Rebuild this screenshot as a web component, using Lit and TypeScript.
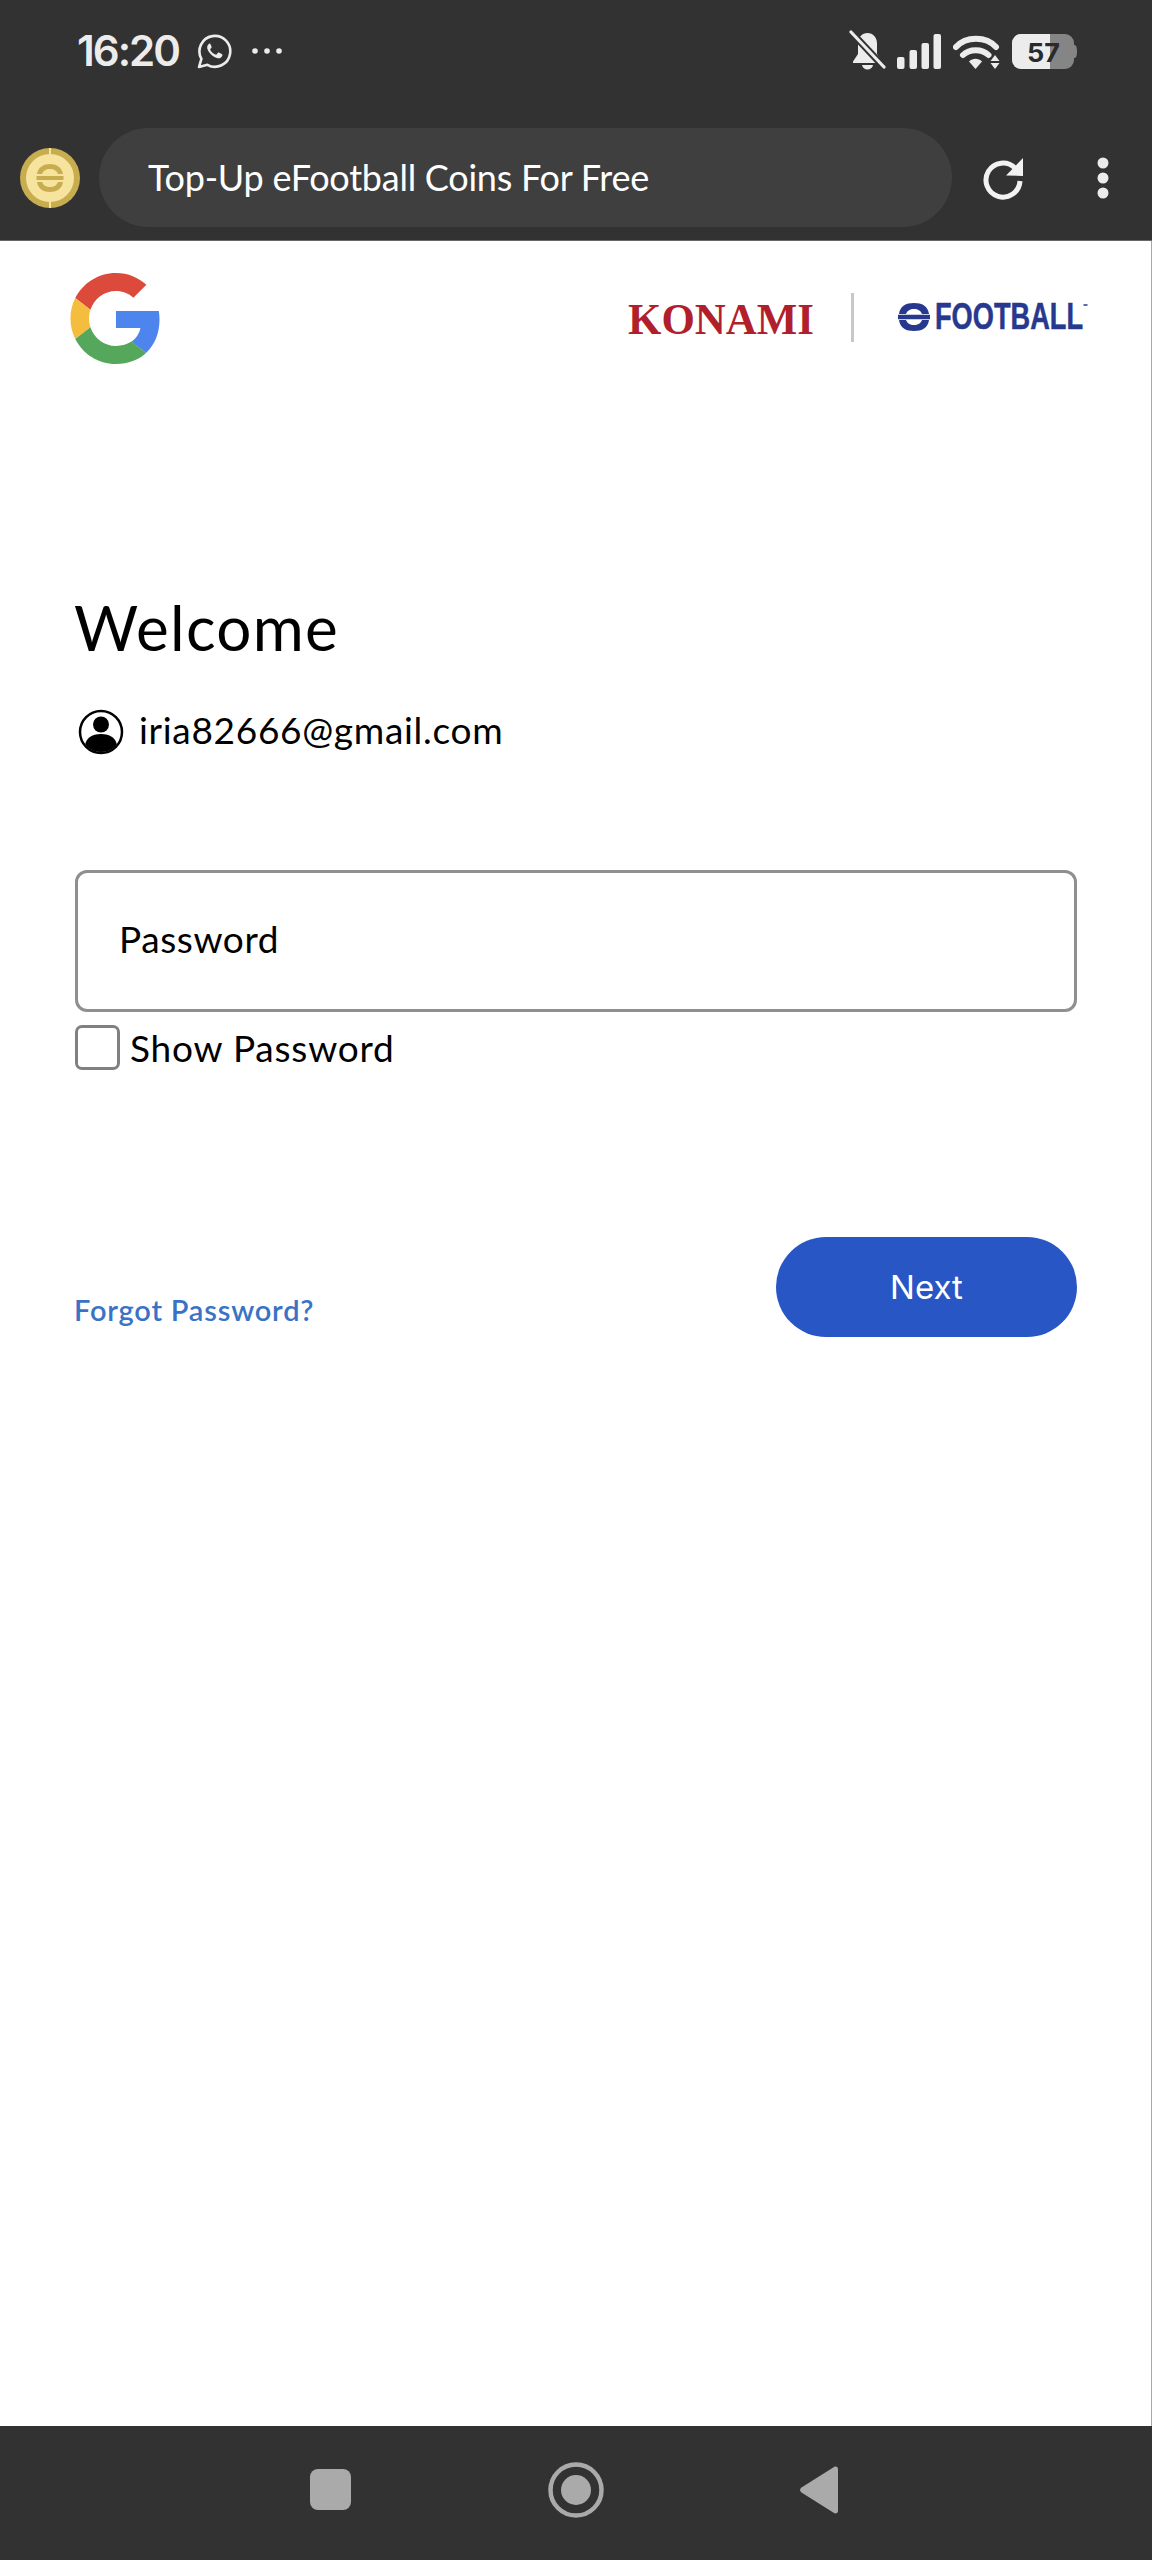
import { LitElement, html, css } from "lit";
import { customElement } from "lit/decorators.js";

@customElement("app-root")
export class AppRoot extends LitElement {
  static styles = css`
    :host { display: block; width: 1152px; height: 2560px; font-family: Lato, "Noto Sans", sans-serif; color: #000; }
    * { box-sizing: border-box; }
    .page { width: 1152px; height: 2560px; display: flex; flex-direction: column; background: #fff; }
    .top { height: 241px; background: #323232; border-bottom: 1px solid #666; flex: none; }
    .status { height: 128px; padding: 34px 75px 0 77px; display: flex; align-items: flex-start; color: #ececec; }
    .time { font: 600 42px/34px Inter, sans-serif; letter-spacing: -2px; width: 120px; }
    .wa { width: 35px; height: 35px; display: block; }
    .more { width: 30px; height: 6px; margin: 14px 0 0 20px; display: block; }
    .spacer { flex: 1; }
    .sys { display: flex; align-items: flex-start; }
    .bell { width: 37px; height: 40px; margin: -4px 11px 0 0; display: block; }
    .signal { width: 44px; height: 35px; margin-right: 12px; display: block; }
    .wifi { width: 47px; height: 35px; margin-right: 12px; display: block; }
    .battery { width: 65px; height: 35px; display: block; overflow: visible; }
    .toolbar { height: 99px; padding-left: 20px; display: flex; align-items: center; }
    .coin { width: 60px; height: 60px; display: block; }
    .pill { width: 853px; height: 99px; margin-left: 19px; border-radius: 50px; background: #3f3f3f; color: #fff; display: flex; align-items: center; padding: 0 0 2px 49px; font-size: 36px; letter-spacing: -.25px; font-weight: 400; white-space: nowrap; }
    .reload { width: 44px; height: 44px; margin-left: 29px; display: block; }
    .dots { width: 12px; height: 42px; margin-left: 72px; display: block; }
    .main { flex: 1; border-right: 1px solid #a8a8a8; padding: 32px 74px 0 75px; display: flex; flex-direction: column; }
    .brand { display: flex; align-items: flex-start; justify-content: space-between; height: 92px; margin-left: -5px; }
    .g { width: 90px; height: 91px; display: block; }
    .logos { display: flex; align-items: flex-start; margin-right: -61px; }
    .konami { width: 200px; height: 52px; margin-top: 20px; display: block; }
    .sep { width: 3px; height: 49px; background: #c8c8c8; margin: 20px 44px 0 25px; }
    .ef { width: 240px; height: 44px; margin-top: 20px; display: block; }
    h1 { margin: 226px 0 0 -1px; font-size: 62px; line-height: 72px; font-weight: 400; letter-spacing: 1.3px; }
    .email { display: flex; align-items: center; margin-top: 46px; height: 46px; font-size: 37px; letter-spacing: .7px; padding-left: 3px; gap: 15px; }
    .email span { margin-top: -5px; }
    .avatar { width: 46px; height: 46px; display: block; }
    .input { margin-top: 115px; height: 142px; border: 3px solid #8f8f8f; border-radius: 12px; display: flex; align-items: center; padding: 0 0 6px 41px; font-size: 37px; letter-spacing: .6px; }
    .show { display: flex; align-items: center; margin-top: 13px; height: 45px; font-size: 37px; letter-spacing: .8px; gap: 10px; }
    .box { width: 45px; height: 45px; border: 3px solid #808080; border-radius: 7px; flex: none; }
    .actions { display: flex; align-items: flex-end; justify-content: space-between; margin-top: 167px; }
    .forgot { color: #3a73c4; font-size: 29px; font-weight: 600; letter-spacing: .8px; line-height: 36px; margin: 0 0 9px -1px; }
    .next { width: 301px; height: 100px; border-radius: 50px; background: #2856c4; color: #fff; display: flex; align-items: center; justify-content: center; font: 400 33px/1 Inter, sans-serif; }
    .nav { height: 134px; background: #323232; flex: none; display: flex; align-items: flex-start; padding: 36px 0 0 310px; }
    .navsq { width: 41px; height: 41px; margin-top: 7px; border-radius: 8px; background: #aaa; }
    .navc { width: 56px; height: 56px; margin-left: 197px; display: block; }
    .navb { width: 40px; height: 48px; margin-left: 196px; margin-top: 4px; display: block; }
  `;

  render() {
    return html`
      <div class="page">
        <div class="top">
          <div class="status">
            <div class="time">16:20</div>
            <svg class="wa" viewBox="0 0 35 35" fill="none">
              <path d="M2 33l2.4-8.2A15.4 15.4 0 1 1 10.4 30.8z" stroke="#ececec" stroke-width="2.6" stroke-linejoin="round"/>
              <path d="M12.6 9.6c-1 .2-2.7 2-2.4 4.4.4 3 4.7 9 10.4 10.2 2.3.4 4.4-1 4.8-2.8.1-.7-.1-1-.6-1.300l-3-1.500c-.5-.2-.8-.1-1.100.3l-1.200 1.500c-.3.3-.6.4-1 .2-2.300-1-4-2.500-5.200-4.600-.2-.4-.1-.7.100-1l1-1.200c.3-.3.300-.6.200-1l-1.200-2.900c-.2-.4-.5-.5-.8-.5z" fill="#ececec"/>
            </svg>
            <svg class="more" viewBox="0 0 30 6"><circle cx="3" cy="3" r="2.800" fill="#ececec"/><circle cx="15" cy="3" r="2.800" fill="#ececec"/><circle cx="27" cy="3" r="2.800" fill="#ececec"/></svg>
            <div class="spacer"></div>
            <div class="sys">
              <svg class="bell" viewBox="0 0 37 40">
                <path d="M18.500 3c5.500 0 9.500 4.300 9.500 10.500V24l5 7.500v1.500H4v-1.500l5-7.500V13.500C9 7.300 13 3 18.500 3z" fill="#ececec"/>
                <path d="M13 35h11c-.5 2.800-2.800 4.500-5.500 4.500S13.500 37.800 13 35z" fill="#ececec"/>
                <path d="M2 2l33 35" stroke="#323232" stroke-width="7"/>
                <path d="M2 2l33 35" stroke="#ececec" stroke-width="3.200" stroke-linecap="round"/>
              </svg>
              <svg class="signal" viewBox="0 0 44 35" fill="#ececec">
                <rect x="0" y="23" width="7.500" height="12" rx="2"/>
                <rect x="12.500" y="16" width="7.500" height="19" rx="2"/>
                <rect x="24.500" y="9" width="7.500" height="26" rx="2"/>
                <rect x="36.500" y="0" width="7.500" height="35" rx="2"/>
              </svg>
              <svg class="wifi" viewBox="0 0 47 35" fill="none">
                <path d="M3 13C13 2 33 2 43 13" stroke="#ececec" stroke-width="6" stroke-linecap="round"/>
                <path d="M10 21C16.500 14.500 29 14.500 35.500 21" stroke="#ececec" stroke-width="6" stroke-linecap="round"/>
                <path d="M16 27.500c3.500-3.800 9.500-3.800 13 0L22.500 35z" fill="#ececec"/>
                <path d="M42 21l4.500 6h-9zM42 35l4.500-6h-9z" fill="#ececec"/>
              </svg>
              <svg class="battery" viewBox="0 0 65 35">
                <rect x="0" y="0" width="62" height="35" rx="9" fill="#858585"/>
                <path d="M61 11h1.500c1.500 0 2.500 2 2.500 6.500s-1 6.500-2.500 6.500H61z" fill="#858585"/>
                <path d="M9 0h29v35H9a9 9 0 0 1-9-9V9a9 9 0 0 1 9-9z" fill="#ececec"/>
                <text x="15" y="28" font-family="Inter, sans-serif" font-size="26" font-weight="700" fill="#2a2a2a" textLength="33" lengthAdjust="spacingAndGlyphs">57</text>
              </svg>
            </div>
          </div>
          <div class="toolbar">
            <svg class="coin" viewBox="0 0 60 60">
              <circle cx="30" cy="30" r="30" fill="#c8ad50"/>
              <circle cx="30" cy="30" r="24" fill="#f6e39e"/>
              <rect x="29" y="0" width="2" height="6" fill="#f6e39e"/>
              <rect x="29" y="54" width="2" height="6" fill="#f6e39e"/>
              <path d="M17 26c1-7 7-10 13-10s12 3 13 10h-5c-1-3-4-5-8-5s-7 2-8 5zM17 34c1 7 7 10 13 10s12-3 13-10h-5c-1 3-4 5-8 5s-7-2-8-5zM16.500 28h27v4h-27z" fill="#c8ad50"/>
            </svg>
            <div class="pill">Top-Up eFootball Coins For Free</div>
            <svg class="reload" viewBox="0 0 44 44" fill="none">
              <path d="M34 12A17 17 0 1 0 39 25" stroke="#f2f2f2" stroke-width="5"/>
              <path d="M25 19.500L42 20V2z" fill="#f2f2f2"/>
            </svg>
            <svg class="dots" viewBox="0 0 12 42" fill="#ececec"><circle cx="6" cy="6" r="5.500"/><circle cx="6" cy="21" r="5.500"/><circle cx="6" cy="36" r="5.500"/></svg>
          </div>
        </div>
        <div class="main">
          <div class="brand">
            <svg class="g" viewBox="0 0 47 48">
              <path fill="#db4a3a" d="M24 9.500c3.540 0 6.710 1.220 9.210 3.600l6.850-6.850C35.900 2.380 30.470 0 24 0 14.620 0 6.510 5.380 2.560 13.220l7.980 6.190C12.430 13.720 17.740 9.500 24 9.500z"/>
              <path fill="#4e84ee" d="M46.980 24.550c0-1.570-.15-3.090-.38-4.550H24v9.020h12.940c-.58 2.960-2.260 5.480-4.780 7.180l7.730 6c4.510-4.180 7.090-10.360 7.090-17.650z"/>
              <path fill="#f4bd3e" d="M10.530 28.590c-.48-1.450-.76-2.990-.76-4.590s.27-3.140.76-4.590l-7.980-6.190C.92 16.460 0 20.120 0 24c0 3.880.92 7.540 2.560 10.780l7.970-6.190z"/>
              <path fill="#55a75b" d="M24 48c6.480 0 11.930-2.130 15.890-5.810l-7.730-6c-2.150 1.450-4.920 2.300-8.160 2.300-6.260 0-11.570-4.220-13.470-9.910l-7.980 6.190C6.510 42.620 14.620 48 24 48z"/>
            </svg>
            <div class="logos">
              <svg class="konami" viewBox="0 0 200 52">
                <text x="2" y="41" font-family="Liberation Serif, serif" font-weight="700" font-size="45" fill="#b01f2b" textLength="186" lengthAdjust="spacingAndGlyphs">KONAMI</text>
              </svg>
              <div class="sep"></div>
              <svg class="ef" viewBox="0 0 240 44">
                <g transform="translate(0 9)">
                  <path d="M1 12C2 4 8 1 16 1s14 3 15 11h-7c-1-3-4-5-8-5s-7 2-8 5zM1 18c1 8 7 11 15 11s14-3 15-11h-7c-1 3-4 5-8 5s-7-2-8-5zM0 12.800h32v4.400H0z" fill="#27398f"/>
                </g>
                <text x="37" y="36" font-family="Liberation Sans, sans-serif" font-weight="700" font-size="36" fill="#27398f" stroke="#27398f" stroke-width=".5" textLength="148" lengthAdjust="spacingAndGlyphs">FOOTBALL</text>
                <path d="M185.500 12h4" stroke="#27398f" stroke-width="1.500"/>
              </svg>
            </div>
          </div>
          <h1>Welcome</h1>
          <div class="email">
            <svg class="avatar" viewBox="0 0 46 46">
              <defs><clipPath id="av"><circle cx="23" cy="23" r="20"/></clipPath></defs>
              <circle cx="23" cy="23" r="21" fill="#fff" stroke="#000" stroke-width="2.500"/>
              <circle cx="23" cy="15.500" r="8" fill="#000"/>
              <path d="M7 38c0-9 7-13 16-13s16 4 16 13v8H7z" fill="#000" clip-path="url(#av)"/>
            </svg>
            <span>iria82666@gmail.com</span>
          </div>
          <div class="input">Password</div>
          <div class="show"><div class="box"></div><span>Show Password</span></div>
          <div class="actions">
            <div class="forgot">Forgot Password?</div>
            <div class="next">Next</div>
          </div>
        </div>
        <div class="nav">
          <div class="navsq"></div>
          <svg class="navc" viewBox="0 0 56 56">
            <circle cx="28" cy="28" r="25.500" fill="none" stroke="#aaa" stroke-width="4.500"/>
            <circle cx="28" cy="28" r="15" fill="#aaa"/>
          </svg>
          <svg class="navb" viewBox="0 0 40 48">
            <path d="M1.500 21.500L34 1c2-1 4 0 4 2v42c0 2-2 3-4 2L1.500 26.500c-2-1.500-2-3.500 0-5z" fill="#aaa"/>
          </svg>
        </div>
      </div>
    `;
  }
}
